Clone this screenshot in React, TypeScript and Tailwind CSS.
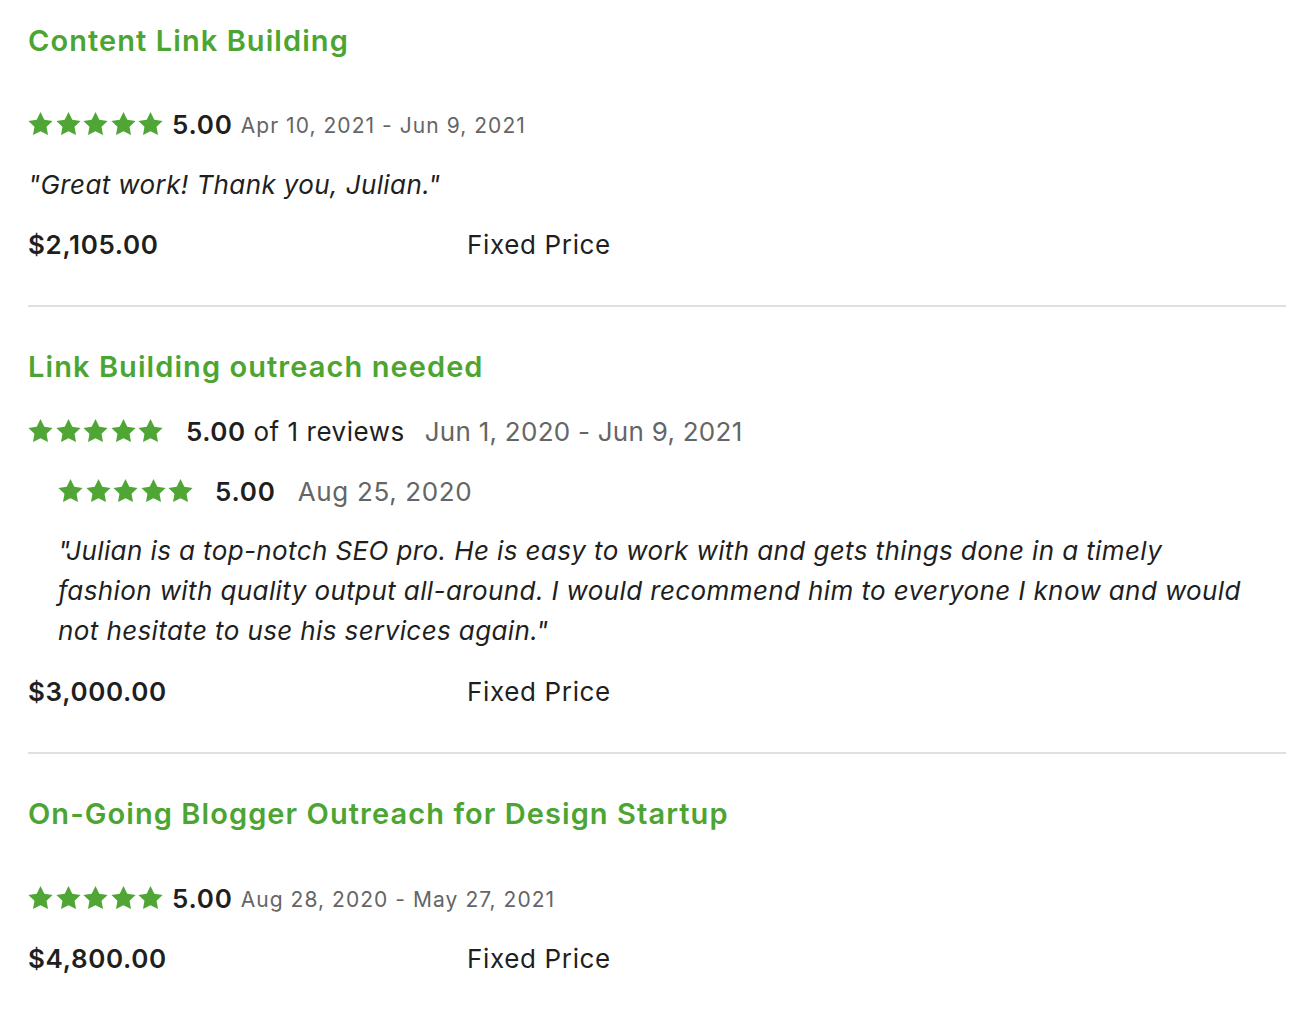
import React from "react";

const green = "text-[#4ca532]";

const Star = () => (
  <svg width="25" height="24" viewBox="0 0 25 24" className="shrink-0">
    <polygon
      fill="#4fa635"
      points="12.5,0.1 16.3,7.7 24.6,8.9 18.55,14.75 20,23 12.5,19.2 5,23 6.45,14.75 0.4,8.9 8.7,7.7"
    />
  </svg>
);

const Stars = () => (
  <div className="flex gap-[2.5px]">
    {[0, 1, 2, 3, 4].map((i) => (
      <Star key={i} />
    ))}
  </div>
);

const PriceRow = ({ amount }: { amount: string }) => (
  <div className="flex items-center h-10 mt-5">
    <span className="w-[439px] text-[26px] font-semibold tracking-[0.025em] text-[#1f1f1f]">{amount}</span>
    <span className="text-[26px] tracking-[0.025em] text-[#1f1f1f]">Fixed Price</span>
  </div>
);

const Title = ({ children, className = "" }: { children: React.ReactNode; className?: string }) => (
  <h2 className={`h-10 flex items-center text-[29px] font-semibold tracking-[0.037em] ${green} ${className}`}>
    {children}
  </h2>
);

export default function App() {
  return (
    <div
      className="bg-white min-h-[1012px] pl-[28px] pr-[18px] pt-[21px] text-[#1f1f1f]"
      style={{ fontFamily: "Inter, 'Liberation Sans', sans-serif" }}
    >
      {/* job 1 */}
      <section>
        <Title>Content Link Building</Title>
        <div className="flex items-center h-10 mt-[43px]">
          <Stars />
          <span className="ml-[9px] text-[26px] font-semibold tracking-[0.03em]">5.00</span>
          <span className="ml-[8px] text-[21px] tracking-[0.05em] text-[#656565] mt-[3px]">
            Apr 10, 2021 - Jun 9, 2021
          </span>
        </div>
        <p className="h-10 flex items-center mt-5 text-[26px] italic tracking-[0.015em]">
          "Great work! Thank you, Julian."
        </p>
        <PriceRow amount="$2,105.00" />
      </section>

      <hr className="border-0 h-[2px] bg-[#e0e0e0] mt-[41px]" />

      {/* job 2 */}
      <section>
        <Title className="mt-10">Link Building outreach needed</Title>
        <div className="flex items-center h-10 mt-6">
          <Stars />
          <span className="ml-[23px] text-[26px] tracking-[0.02em]">
            <span className="font-semibold">5.00</span> of 1 reviews
          </span>
          <span className="ml-[20px] text-[26px] tracking-[0.01em] text-[#656565]">Jun 1, 2020 - Jun 9, 2021</span>
        </div>
        <div className="pl-[30px]">
          <div className="flex items-center h-10 mt-5">
            <Stars />
            <span className="ml-[22px] text-[26px] font-semibold tracking-[0.03em]">5.00</span>
            <span className="ml-[22px] text-[26px] tracking-[0.025em] text-[#656565]">Aug 25, 2020</span>
          </div>
          <p className="mt-5 text-[26px] italic leading-10 tracking-[0.015em]">
            <span className="block whitespace-nowrap">
              "Julian is a top-notch SEO pro. He is easy to work with and gets things done in a timely
            </span>
            <span className="block whitespace-nowrap">
              fashion with quality output all-around. I would recommend him to everyone I know and would
            </span>
            <span className="block whitespace-nowrap">not hesitate to use his services again."</span>
          </p>
        </div>
        <PriceRow amount="$3,000.00" />
      </section>

      <hr className="border-0 h-[2px] bg-[#e0e0e0] mt-[41px]" />

      {/* job 3 */}
      <section>
        <Title className="mt-10">On-Going Blogger Outreach for Design Startup</Title>
        <div className="flex items-center h-10 mt-[44px]">
          <Stars />
          <span className="ml-[9px] text-[26px] font-semibold tracking-[0.03em]">5.00</span>
          <span className="ml-[8px] text-[21px] tracking-[0.05em] text-[#656565] mt-[3px]">
            Aug 28, 2020 - May 27, 2021
          </span>
        </div>
        <PriceRow amount="$4,800.00" />
      </section>
    </div>
  );
}
